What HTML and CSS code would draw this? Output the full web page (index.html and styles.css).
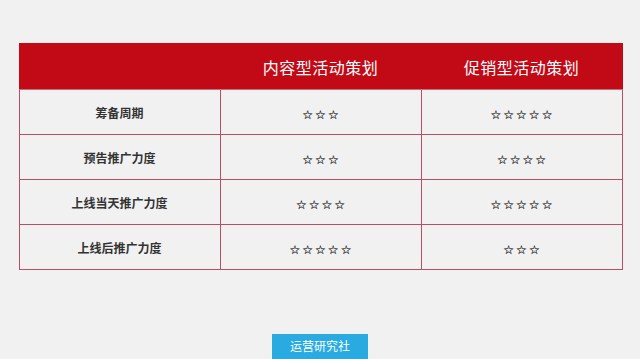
FILE: index.html
```html
<!DOCTYPE html>
<html lang="zh">
<head>
<meta charset="utf-8">
<link rel="stylesheet" href="styles.css">
</head>
<body>
<div class="page">
  <table class="cmp">
    <thead>
      <tr><th class="blank"></th><th>内容型活动策划</th><th>促销型活动策划</th></tr>
    </thead>
    <tbody>
      <tr><td class="label">筹备周期</td><td><span class="stars">☆☆☆</span></td><td><span class="stars">☆☆☆☆☆</span></td></tr>
      <tr><td class="label">预告推广力度</td><td><span class="stars">☆☆☆</span></td><td><span class="stars">☆☆☆☆</span></td></tr>
      <tr><td class="label">上线当天推广力度</td><td><span class="stars">☆☆☆☆</span></td><td><span class="stars">☆☆☆☆☆</span></td></tr>
      <tr><td class="label">上线后推广力度</td><td><span class="stars">☆☆☆☆☆</span></td><td><span class="stars">☆☆☆</span></td></tr>
    </tbody>
  </table>
  <div class="badge">运营研究社</div>
</div>
</body>
</html>
```
FILE: styles.css
```css
html, body {
  margin: 0;
  padding: 0;
  background: #f1f1f1;
  font-family: "Noto Sans CJK SC", "Noto Sans", sans-serif;
}
.page {
  width: 640px;
  height: 359px;
  overflow: hidden;
  display: flex;
  flex-direction: column;
  align-items: center;
  padding-top: 43px;
  box-sizing: border-box;
}
.cmp {
  border-collapse: collapse;
  table-layout: fixed;
  width: 604px;
  margin-left: 1px;
}
.cmp th {
  background: #c20a17;
  color: #fff;
  font-weight: 400;
  font-size: 16px;
  height: 45px;
  padding: 0;
  border: 1px solid #c20a17;
  border-bottom-color: #c9707b;
  letter-spacing: 0.5px;
}
.cmp td {
  height: 44px;
  padding: 0;
  border: 1px solid #b94f60;
  text-align: center;
  vertical-align: middle;
  color: #333;
}
.label {
  font-size: 12px;
  font-weight: 700;
  color: #222;
}
.stars {
  font-family: "DejaVu Sans", sans-serif;
  font-size: 12px;
  letter-spacing: 2px;
  color: #222;
  margin-left: 2px;
  -webkit-text-stroke: 0.2px #222;
}
.badge {
  margin-top: 64px;
  width: 96px;
  height: 30px;
  background: #29abe2;
  color: #fff;
  font-size: 12px;
  display: flex;
  justify-content: center;
  padding-top: 3px;
  box-sizing: border-box;
}
```
